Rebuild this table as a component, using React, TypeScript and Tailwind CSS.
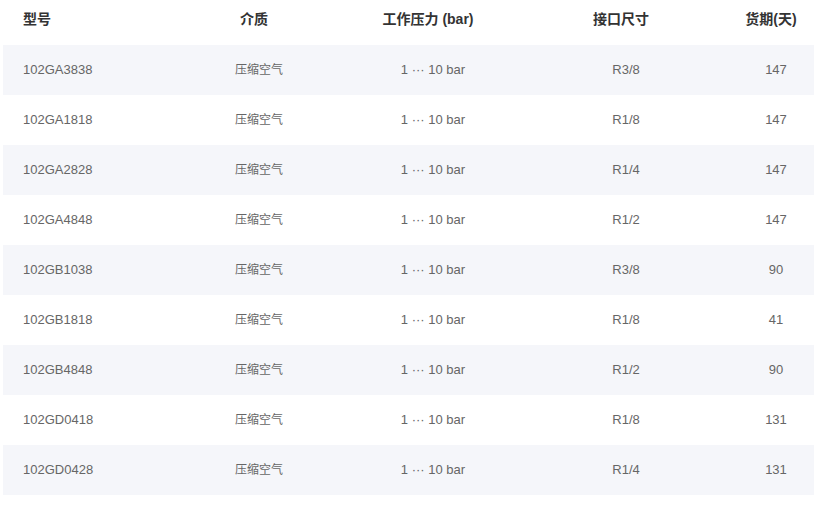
import React from 'react';

const rows = [
  ['102GA3838', '压缩空气', '1 ··· 10 bar', 'R3/8', '147'],
  ['102GA1818', '压缩空气', '1 ··· 10 bar', 'R1/8', '147'],
  ['102GA2828', '压缩空气', '1 ··· 10 bar', 'R1/4', '147'],
  ['102GA4848', '压缩空气', '1 ··· 10 bar', 'R1/2', '147'],
  ['102GB1038', '压缩空气', '1 ··· 10 bar', 'R3/8', '90'],
  ['102GB1818', '压缩空气', '1 ··· 10 bar', 'R1/8', '41'],
  ['102GB4848', '压缩空气', '1 ··· 10 bar', 'R1/2', '90'],
  ['102GD0418', '压缩空气', '1 ··· 10 bar', 'R1/8', '131'],
  ['102GD0428', '压缩空气', '1 ··· 10 bar', 'R1/4', '131'],
];

const headers = ['型号', '介质', '工作压力 (bar)', '接口尺寸', '货期(天)'];

const cols = 'grid grid-cols-[162px_178px_170px_216px_84px]';

const App: React.FC = () => {
  return (
    <div
      className="w-[814px] h-[505px] bg-white pl-[3px]"
      style={{ fontFamily: '"Liberation Sans", Arial, "Noto Sans CJK SC", sans-serif' }}
    >
      {/* 表头 */}
      <div className={`${cols} h-[45px] pb-[7px] items-center text-[14px] font-bold text-[#333]`}>
        {headers.map((h, i) => (
          <div key={h} className={i === 0 ? 'pl-[20px]' : 'text-center'}>
            {h}
          </div>
        ))}
      </div>
      {/* 数据行 */}
      {rows.map((r, idx) => (
        <div
          key={r[0]}
          className={`${cols} h-[50px] items-center text-[13px] text-[#666] ${idx % 2 === 0 ? 'bg-[#f5f6fa]' : 'bg-white'}`}
        >
          {r.map((c, i) => (
            <div
              key={i}
              className={i === 0 ? 'pl-[20px]' : i === 1 ? 'text-center pl-[10px] text-[12px]' : 'text-center pl-[10px]'}
            >
              {c}
            </div>
          ))}
        </div>
      ))}
    </div>
  );
};

export default App;
